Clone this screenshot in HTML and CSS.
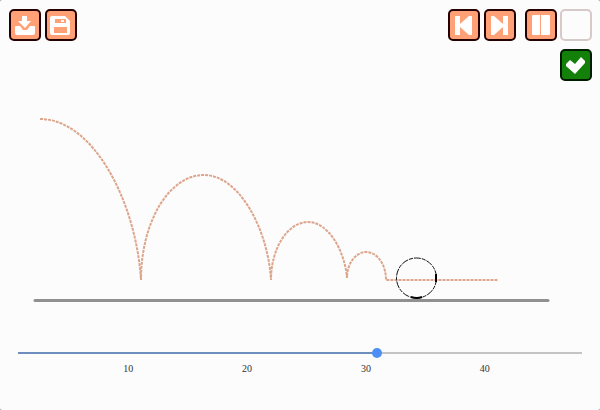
FILE: index.html
```html
<!DOCTYPE html>
<html lang="en">
<head>
<meta charset="utf-8">
<title>Bouncing ball</title>
<link rel="stylesheet" href="styles.css">
</head>
<body>
<main class="app">
  <header class="toolbar">
    <div class="group">
      <button class="btn" type="button" aria-label="Import"><svg viewBox="0 0 32 32"><path d="M13 7h5v5h4l-6 7-7-7h4zM7 17h4l3 4h4l3-4h4q1 0 1 1v6q0 2-2 2H8q-2 0-2-2v-6q0-1 1-1z"/></svg></button>
      <button class="btn" type="button" aria-label="Save"><svg viewBox="0 0 32 32"><path fill-rule="evenodd" d="M7 7h13l5 5v12q0 2-2 2H7q-2 0-2-2V9q0-2 2-2zM10 10v4h11v-4zM9 18v6h13v-6z"/><path d="M16 11h3v2h-3z"/></svg></button>
    </div>
    <div class="controls">
      <div class="group">
        <button class="btn" type="button" aria-label="Previous frame"><svg viewBox="0 0 32 32"><path d="M7 7h5v8l9-8h3v19h-3l-9-8v8H7z"/></svg></button>
        <button class="btn" type="button" aria-label="Next frame"><svg viewBox="0 0 32 32"><path d="M24 7h-5v8l-9-8H7v19h3l9-8v8h5z"/></svg></button>
      </div>
      <div class="group">
        <button class="btn" type="button" aria-label="Pause"><svg viewBox="0 0 32 32"><path d="M8 6h7v20H8q-1 0-1-1V7q0-1 1-1zM16 6h8q1 0 1 1v18q0 1-1 1h-8z"/></svg></button>
        <button class="btn blank" type="button" aria-label="Stop"></button>
        <button class="btn confirm" type="button" aria-label="Confirm"><svg viewBox="0 0 32 32"><path d="M6 15l4-4 5 4 6-7 4 4v2L15 25l-9-8z"/></svg></button>
      </div>
    </div>
  </header>
  <svg class="scene" viewBox="0 0 600 220" role="img" aria-label="Path of a bouncing ball">
    <path class="path" d="M40 29C93 29 136 111 141 190C141 132 169 85 204 85C239 85 268 139 271 190C271 158 288 132 308 132C329 132 345 162 347 188C347 173 356 162 366 162C377 162 386 174 386 190H498"/>
    <path class="ground" d="M35 210.500H548"/>
    <circle class="ball" cx="416.500" cy="188" r="20"/>
    <path class="ball-edge" d="M436 184v8M411 207q6 2 11 0"/>
  </svg>
  <section class="timeline">
    <input class="slider" type="range" min="1" max="48" value="31" aria-label="Frame">
    <div class="ticks"><span>10</span><span>20</span><span>30</span><span>40</span></div>
  </section>
</main>
</body>
</html>
```
FILE: styles.css
```css
* { box-sizing: border-box; }
html { background: #999; }
body { margin: 0; }
.app {
  min-height: 100vh;
  background: #fcfcfc;
  border-radius: 2px;
}
.toolbar {
  display: flex;
  justify-content: space-between;
  align-items: flex-start;
  padding: 9px 8px 9px 9px;
}
.group { display: flex; gap: 4px; }
.controls { display: flex; gap: 9px; }
.controls .group:last-child {
  display: grid;
  grid-template-columns: 32px 32px;
  gap: 8px 3px;
}
.btn {
  width: 32px;
  height: 32px;
  padding: 0;
  border: 2px solid #240000;
  border-radius: 5px;
  background: #ffa077;
}
.btn svg {
  display: block;
  width: 32px;
  height: 32px;
  margin: -2px;
  fill: #fff;
}
.blank { border-color: #d8c9c9; background: #fcfcfc; }
.confirm {
  grid-column: 2;
  border-color: #001c00;
  background: #138009;
}
.scene { display: block; width: 100%; }
.path {
  fill: none;
  stroke: #dca58c;
  stroke-width: 2;
  stroke-dasharray: 3 1;
}
.ground {
  stroke: #909090;
  stroke-width: 3;
  stroke-linecap: round;
}
.ball { fill: none; stroke: #111; stroke-dasharray: 7 1 4 1; }
.ball-edge { fill: none; stroke: #000; stroke-width: 2; }
.timeline { padding: 38px 18px 0; }
.slider {
  display: block;
  width: 100%;
  height: 10px;
  margin: 0;
  appearance: none;
  background: linear-gradient(to right, #6e8ebd 64%, #c4c4c4 64%) center / 100% 2px no-repeat;
}
.slider::-webkit-slider-thumb {
  width: 10px;
  height: 10px;
  appearance: none;
  border-radius: 50%;
  background: #4d8ff5;
}
.ticks {
  display: flex;
  padding: 5px 38px 0 51px;
  padding-inline: 9% 6.7%;
  color: #333;
  font: 10px/12px "Liberation Serif", serif;
}
.ticks span { flex: 1; text-align: center; }
```
